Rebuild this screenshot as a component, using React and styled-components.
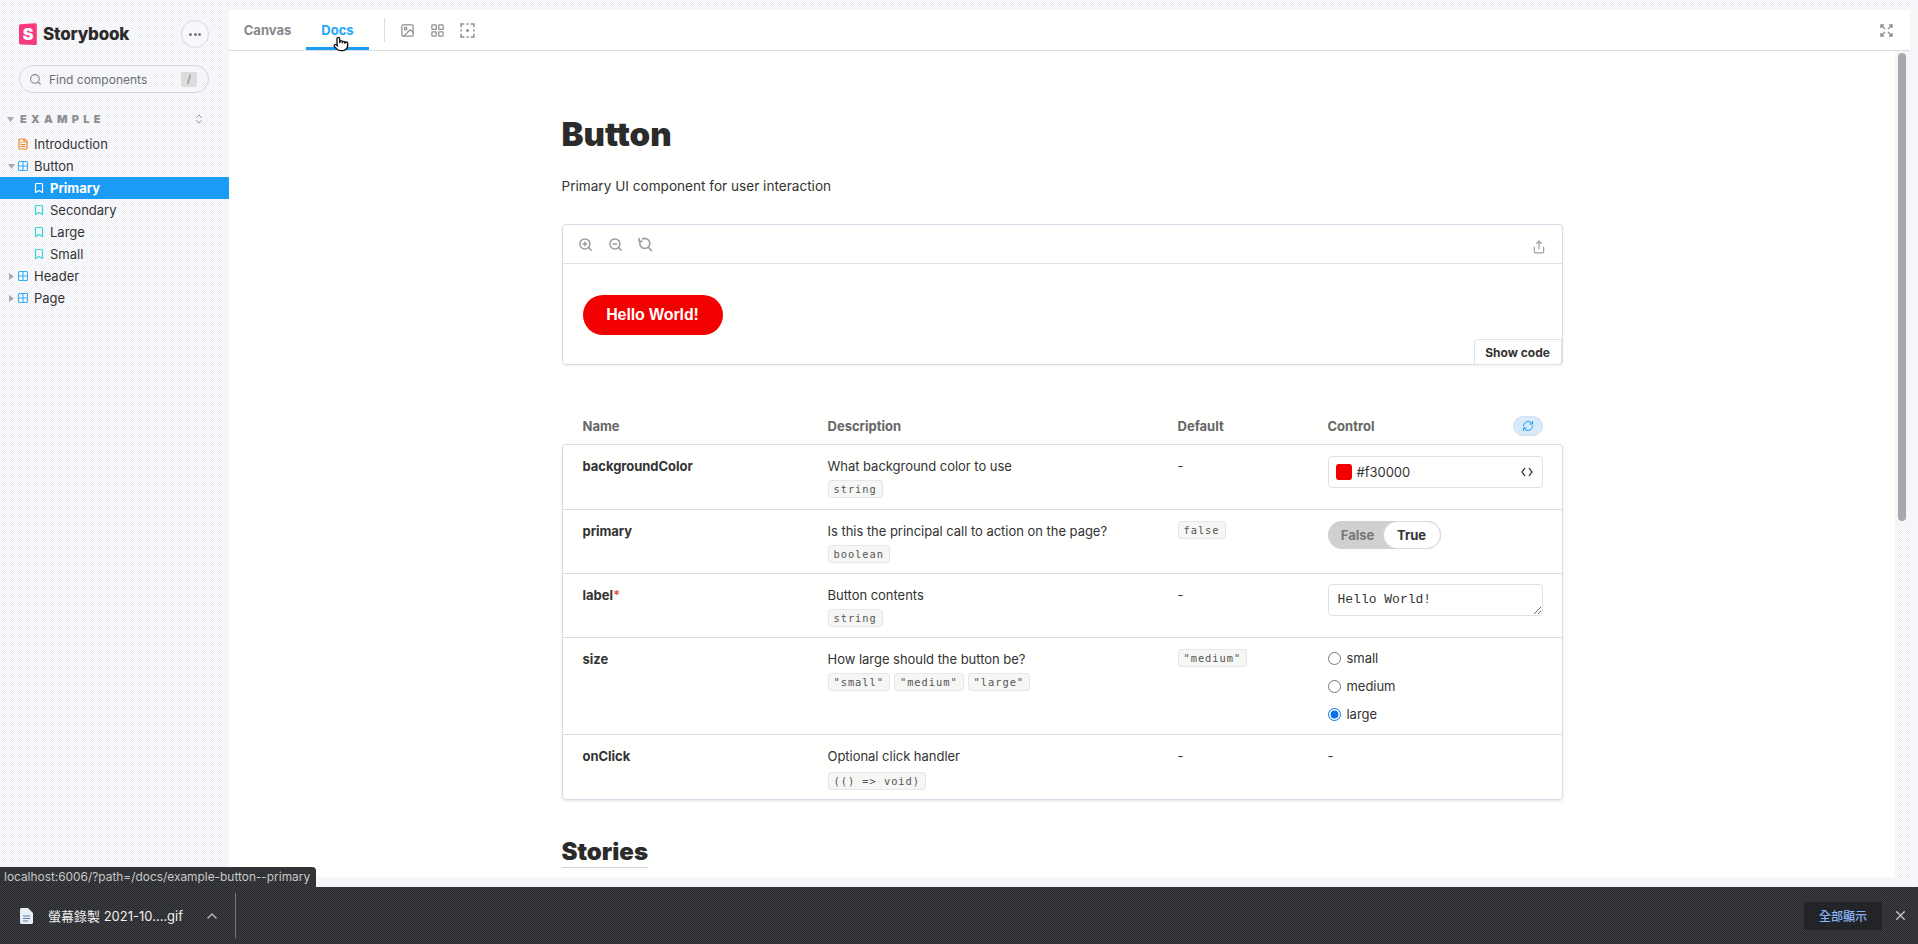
import React from "react";
import styled, { createGlobalStyle } from "styled-components";
import {
  Search, ZoomIn, ZoomOut, Image as ImageIcon, LayoutGrid, Share, ChevronUp, X,
  Bookmark, RefreshCw, ChevronsUpDown, Grid2x2, FileText, Pointer,
} from "lucide-react";

const sideDither = `repeating-conic-gradient(#eceef4 0 25%, #fefeff 0 50%) 0 0 / 2px 2px`;
const whiteDots = `radial-gradient(circle at 1px 1px, #fffcc8 0.5px, transparent 0.62px) 0 0 / 4px 4px, #fffffe`;
const darkDither = `repeating-conic-gradient(#2a2b2e 0 25%, #3b3c40 0 50%) 0 0 / 2px 2px`;

const Global = createGlobalStyle`
  html, body { margin: 0; padding: 0; height: 100%; overflow: hidden; }
  body { font-family: Inter, "Noto Sans CJK TC", sans-serif; color: #333; }
  #root { height: 100%; }
`;

const Page = styled.div`
  position: relative;
  display: flex;
  flex-direction: column;
  height: 100vh;
  background: ${sideDither};
`;
const Workspace = styled.div`
  flex: 1;
  min-height: 0;
  display: flex;
`;
const Sidebar = styled.aside`
  flex: 0 0 229px;
  display: flex;
  flex-direction: column;
  padding-top: 20px;
`;
const Brand = styled.div`
  display: flex;
  align-items: center;
  height: 28px;
  padding: 0 20px 0 19px;
  gap: 6px;
`;
const BrandName = styled.span`
  flex: 1;
  font-size: 17px;
  font-weight: 800;
  letter-spacing: -0.2px;
  color: #2b2b2b;
`;
const MenuButton = styled.button`
  width: 28px;
  height: 28px;
  border: 1px solid #d8d8dc;
  border-radius: 50%;
  background: #f7f8fb;
  color: #777;
  padding: 0;
  display: flex;
  align-items: center;
  justify-content: center;
  gap: 1.5px;
`;
const Dot = styled.i`
  width: 3px;
  height: 3px;
  border-radius: 50%;
  background: #777;
`;
const SearchBox = styled.div`
  display: flex;
  align-items: center;
  margin: 17px 20px 0 19px;
  height: 28px;
  box-sizing: border-box;
  border: 1px solid #d3d6de;
  border-radius: 14px;
  padding: 0 11px 0 9px;
  color: #888;
  font-size: 12px;
  gap: 7px;
`;
const SearchText = styled.span`
  flex: 1;
  color: #6b6f75;
`;
const Kbd = styled.span`
  width: 16px;
  height: 15px;
  background: #dcdcdc;
  color: #777;
  font-size: 11px;
  display: flex;
  align-items: center;
  justify-content: center;
  border-radius: 2px;
`;
const GroupHead = styled.div`
  display: flex;
  align-items: center;
  margin-top: 18px;
  height: 16px;
  padding: 0 24px 0 7px;
  color: #999;
`;
const GroupLabel = styled.span`
  flex: 1;
  margin-left: 6px;
  font-size: 11px;
  font-weight: 900;
  letter-spacing: 0.39em;
  color: #8f9193;
`;
const Tree = styled.div`
  margin-top: 6px;
  display: flex;
  flex-direction: column;
`;
const Row = styled.div`
  height: 22px;
  display: flex;
  align-items: center;
  font-size: 13px;
  color: ${(p) => (p.$active ? "#fff" : "#333")};
  font-weight: ${(p) => (p.$active ? 700 : 400)};
  background: ${(p) => (p.$active ? "#1a9bf5" : "transparent")};
  padding-left: ${(p) => (p.$sub ? 33 : 6)}px;
`;
const Caret = styled.span`
  width: 10px;
  display: flex;
  justify-content: center;
  color: #aaa;
`;
const RowIcon = styled.span`
  width: 12px;
  display: flex;
  justify-content: center;
  margin: 0 5px 0 ${(p) => (p.$sub ? 0 : 1)}px;
  color: ${(p) => p.$c};
`;

const Panel = styled.main`
  flex: 1;
  min-width: 0;
  margin: 10px 8px 10px 0;
  display: flex;
  flex-direction: column;
  background: ${whiteDots};
`;
const Toolbar = styled.div`
  flex: 0 0 40px;
  box-sizing: border-box;
  border-bottom: 1px solid #dcdde8;
  display: flex;
  align-items: center;
  padding: 0 17px 0 0;
  position: relative;
`;
const Tab = styled.div`
  height: 40px;
  box-sizing: border-box;
  display: flex;
  align-items: center;
  justify-content: center;
  width: ${(p) => p.$w}px;
  margin-left: ${(p) => p.$ml}px;
  font-size: 13px;
  font-weight: 700;
  color: ${(p) => (p.$active ? "#1ea7fd" : "#84878c")};
  border-bottom: 3px solid ${(p) => (p.$active ? "#1a9bf5" : "transparent")};
  padding-top: 3px;
`;
const Divider = styled.div`
  width: 1px;
  height: 24px;
  background: #dcdde0;
  margin: 0 15px;
`;
const ToolIcons = styled.div`
  display: flex;
  gap: 15px;
  color: #8d8f96;
  align-items: center;
`;
const Spacer = styled.div`
  flex: 1;
`;
const Cursor = styled.span`
  position: absolute;
  left: 104px;
  top: 26px;
  color: #111;
  line-height: 0;
`;
const Body = styled.div`
  flex: 1;
  min-height: 0;
  display: flex;
`;
const Doc = styled.div`
  flex: 1;
  min-width: 0;
  overflow: hidden;
  display: flex;
  justify-content: center;
  background: ${whiteDots};
`;
const Column = styled.div`
  width: 1001px;
  padding-top: 65px;
`;
const Track = styled.div`
  flex: 0 0 15px;
  background: ${sideDither};
  padding: 2px 4px 0 3px;
  box-sizing: border-box;
`;
const Thumb = styled.div`
  height: 468px;
  background: #a8a8ac;
  border-radius: 4px;
`;
const Title = styled.h1`
  margin: 0;
  font-size: 33px;
  line-height: 36px;
  font-weight: 900;
  color: #2b2b2b;
`;
const Lead = styled.p`
  margin: 24px 0 0;
  font-size: 13.6px;
  line-height: 20px;
  color: #333;
`;
const Preview = styled.section`
  margin-top: 28px;
  height: 141px;
  box-sizing: border-box;
  border: 1px solid #dadbe6;
  border-radius: 4px;
  position: relative;
  box-shadow: 0 1px 3px rgba(0, 0, 0, 0.07);
`;
const PreviewBar = styled.div`
  height: 39px;
  box-sizing: border-box;
  border-bottom: 1px solid #dfe0ea;
  display: flex;
  align-items: center;
  padding: 0 16px 0 15px;
  color: #9a9ca6;
  gap: 15px;
`;
const ShareSlot = styled.span`
  line-height: 0;
  margin-top: 5px;
`;
const PreviewStage = styled.div`
  padding: 31px 20px;
`;
const HelloButton = styled.button`
  width: 140px;
  height: 40px;
  border: 0;
  border-radius: 20px;
  background: #f30000;
  color: #fff;
  font: 700 16px "Liberation Sans", Arial, sans-serif;
  letter-spacing: -0.1px;
`;
const ShowCode = styled.button`
  position: absolute;
  right: 0;
  bottom: -1px;
  width: 88px;
  height: 26px;
  border: 1px solid #e2e3ea;
  border-radius: 4px 0 4px 0;
  background: #fff;
  color: #333;
  font: 700 12px Inter, sans-serif;
`;
const columns = "245px 350px 150px 215px";
const HeadRow = styled.div`
  margin-top: 51px;
  height: 20px;
  display: grid;
  grid-template-columns: ${columns};
  padding: 0 21px;
  font-size: 13px;
  line-height: 20px;
  font-weight: 700;
  color: #666;
`;
const HeadControl = styled.div`
  display: flex;
  justify-content: space-between;
  align-items: center;
`;
const ResetButton = styled.span`
  width: 30px;
  height: 20px;
  border-radius: 10px;
  background: #d6eafa;
  border: 1px solid #cfe0ee;
  box-sizing: border-box;
  color: #1a9bf5;
  display: flex;
  align-items: center;
  justify-content: center;
`;
const Table = styled.div`
  margin-top: 8px;
  border: 1px solid #dadbe6;
  border-radius: 4px;
  box-shadow: 0 1px 3px rgba(0, 0, 0, 0.1);
`;
const TRow = styled.div`
  display: grid;
  grid-template-columns: ${columns};
  padding: 0 20px;
  height: ${(p) => p.$h}px;
  box-sizing: border-box;
  & + & {
    border-top: 1px solid #dcdce4;
  }
`;
const Cell = styled.div`
  padding-top: 11px;
  font-size: 13px;
  line-height: 20px;
  letter-spacing: -0.03px;
`;
const Name = styled(Cell)`
  font-weight: 700;
  color: #333;
`;
const Required = styled.span`
  color: #e85a4f;
`;
const Pills = styled.div`
  margin-top: ${(p) => p.$mt || 4}px;
  display: flex;
  gap: 4px;
`;
const Pill = styled.code`
  display: block;
  width: fit-content;
  height: 18px;
  box-sizing: border-box;
  padding: 0 5px;
  background: #f6f6f4;
  border: 1px solid #e6e6ea;
  border-radius: 3px;
  font: 10.4px/16px "DejaVu Sans Mono", monospace;
  letter-spacing: 0.95px;
  color: #555;
`;
const ColorField = styled.div`
  height: 32px;
  box-sizing: border-box;
  border: 1px solid #dfe0e6;
  border-radius: 4px;
  display: flex;
  align-items: center;
  padding: 0 9px 0 7px;
  font-size: 13px;
  color: #333;
`;
const Swatch = styled.span`
  width: 16px;
  height: 16px;
  border-radius: 3px;
  background: #f30000;
  margin-right: 5px;
`;
const Toggle = styled.div`
  width: 113px;
  height: 28px;
  box-sizing: border-box;
  border-radius: 14px;
  background: #d0d0d0;
  display: flex;
  font-size: 13px;
  font-weight: 700;
`;
const ToggleOff = styled.span`
  flex: 0 0 55px;
  text-align: center;
  padding-left: 5px;
  box-sizing: border-box;
  line-height: 28px;
  color: #777;
`;
const ToggleOn = styled.span`
  flex: 1;
  background: #fff;
  border: 1px solid #d8d8e2;
  border-radius: 14px;
  text-align: center;
  line-height: 26px;
  color: #333;
`;
const Area = styled.textarea`
  display: block;
  width: 215px;
  height: 32px;
  margin: -1px 0 0;
  box-sizing: border-box;
  border: 1px solid #dfe0e6;
  border-radius: 4px;
  padding: 6px 9px;
  background: transparent;
  font: 13px/18px "Liberation Mono", monospace;
  color: #333;
  resize: vertical;
  overflow: hidden;
`;
const RadioGroup = styled.div`
  display: flex;
  flex-direction: column;
  margin-top: -5px;
`;
const RadioRow = styled.label`
  height: 28px;
  display: flex;
  align-items: center;
  gap: 6px;
  font-size: 13px;
  color: #333;
`;
const Radio = styled.input`
  width: 13px;
  height: 13px;
  margin: 0;
  accent-color: #0b6fe8;
`;
const Stories = styled.h2`
  display: inline-block;
  margin: 37px 0 0;
  font-size: 24px;
  line-height: 30px;
  font-weight: 900;
  color: #2b2b2b;
  border-bottom: 1px solid #cfd0d8;
`;

const DownloadBar = styled.footer`
  flex: 0 0 57px;
  display: flex;
  align-items: center;
  background: ${darkDither};
  color: #e8e8e8;
  padding: 0 10px 0 20px;
  font-size: 13px;
`;
const FileName = styled.span`
  margin-left: 15px;
  font-family: Inter, "Noto Sans CJK TC", sans-serif;
  color: #eee;
`;
const BarChevron = styled.span`
  margin-left: 21px;
  color: #bbb;
  line-height: 0;
`;
const BarDivider = styled.div`
  width: 1px;
  height: 45px;
  background: #77787b;
  margin-left: 15px;
`;
const ShowAll = styled.button`
  width: 78px;
  height: 28px;
  border: 0;
  border-radius: 2px;
  background: #232427;
  color: #8ab4f8;
  font: 500 12px "Noto Sans CJK TC", sans-serif;
  padding: 0;
`;
const CloseIcon = styled.span`
  margin-left: 11px;
  color: #ccc;
  line-height: 0;
`;
const StatusTip = styled.div`
  position: absolute;
  left: 0;
  bottom: 57px;
  height: 20px;
  box-sizing: border-box;
  padding: 0 6px 0 4px;
  border-radius: 0 4px 0 0;
  background: ${darkDither};
  color: #c8c8c8;
  font-size: 11.9px;
  line-height: 20px;
  white-space: nowrap;
`;

const Logo = () => (
  <svg width="18" height="22" viewBox="0 0 18 22">
    <path d="M1.6 1.3 16.2.2c.9 0 1.6.7 1.6 1.6v18.6c0 .9-.8 1.6-1.7 1.6L1.6 21.4C.7 21.3 0 20.6 0 19.8V2.9c0-.8.7-1.5 1.6-1.6Z" fill="#f7397f" />
    <text x="9" y="17" textAnchor="middle" fontFamily="Inter, sans-serif" fontWeight="900" fontSize="16" fill="#fff">S</text>
  </svg>
);
const FrameIcon = () => (
  <svg width="15" height="15" viewBox="0 0 14 14" fill="none" stroke="currentColor" strokeWidth="1.4">
    <path d="M1 4V1h3M6 1h2M10 1h3v3M13 6v2M13 10v3h-3M8 13H6M4 13H1v-3M1 8V6" />
    <circle cx="7" cy="7" r=".7" fill="currentColor" />
  </svg>
);
const FullIcon = () => (
  <svg width="13" height="13" viewBox="0 0 13 13" fill="none" stroke="#8d8f96" strokeWidth="1.4">
    <path d="M1 4V1h3M1 1l4 4M9 1h3v3M12 1 8 5M1 9v3h3M1 12l4-4M12 9v3H9M12 12 8 8" />
  </svg>
);
const ZoomReset = () => (
  <svg width="15" height="15" viewBox="0 0 15 15" fill="none" stroke="currentColor" strokeWidth="1.6">
    <path d="M4.2 2.2a5 5 0 1 1-2.2 3" />
    <path d="M1.2 1v3.4h3.4M10.4 10.4 14 14" />
  </svg>
);
const CodeChevrons = () => (
  <svg width="12" height="10" viewBox="0 0 12 10" fill="none" stroke="#444" strokeWidth="1.3">
    <path d="M4 1 1 5l3 4M8 1l3 4-3 4" />
  </svg>
);
const DocFile = () => (
  <svg width="13" height="16" viewBox="0 0 13 16">
    <path d="M0 1.5C0 .7.7 0 1.5 0H8l5 5v9.5c0 .8-.7 1.5-1.5 1.5h-10C.7 16 0 15.3 0 14.5Z" fill="#e8eef5" />
    <path d="M3 8h7M3 10.5h7M3 13h5" stroke="#5b7fa5" strokeWidth="1.2" />
  </svg>
);
const TriDown = () => (
  <svg width="7" height="5" viewBox="0 0 7 5"><path d="M0 0h7L3.5 5Z" fill="#a9abb0" /></svg>
);
const TriRight = () => (
  <svg width="5" height="7" viewBox="0 0 5 7"><path d="M0 0v7l5-3.5Z" fill="#a9abb0" /></svg>
);

const Story = ({ active, children }) => (
  <Row $sub $active={active}>
    <RowIcon $sub $c={active ? "#fff" : "#37d5d3"}><Bookmark size={12} strokeWidth={2.4} /></RowIcon>
    {children}
  </Row>
);
const Comp = ({ open, children }) => (
  <Row>
    <Caret>{open ? <TriDown /> : <TriRight />}</Caret>
    <RowIcon $c="#3aaef5"><Grid2x2 size={12} strokeWidth={2.2} /></RowIcon>
    {children}
  </Row>
);

export default function App() {
  return (
    <Page>
      <Global />
      <Workspace>
        <Sidebar>
          <Brand>
            <Logo />
            <BrandName>Storybook</BrandName>
            <MenuButton><Dot /><Dot /><Dot /></MenuButton>
          </Brand>
          <SearchBox>
            <Search size={13} />
            <SearchText>Find components</SearchText>
            <Kbd>/</Kbd>
          </SearchBox>
          <GroupHead>
            <TriDown />
            <GroupLabel>EXAMPLE</GroupLabel>
            <ChevronsUpDown size={12} />
          </GroupHead>
          <Tree>
            <Row>
              <Caret />
              <RowIcon $c="#f08a24"><FileText size={12} strokeWidth={2.4} /></RowIcon>
              Introduction
            </Row>
            <Comp open>Button</Comp>
            <Story active>Primary</Story>
            <Story>Secondary</Story>
            <Story>Large</Story>
            <Story>Small</Story>
            <Comp>Header</Comp>
            <Comp>Page</Comp>
          </Tree>
        </Sidebar>
        <Panel>
          <Toolbar>
            <Tab $w={47} $ml={15}>Canvas</Tab>
            <Tab $w={63} $ml={15} $active>Docs</Tab>
            <Divider />
            <ToolIcons>
              <ImageIcon size={15} />
              <LayoutGrid size={15} />
              <FrameIcon />
            </ToolIcons>
            <Spacer />
            <FullIcon />
            <Cursor><Pointer size={16} fill="#fff" /></Cursor>
          </Toolbar>
          <Body>
            <Doc>
              <Column>
                <Title>Button</Title>
                <Lead>Primary UI component for user interaction</Lead>
                <Preview>
                  <PreviewBar>
                    <ZoomIn size={15} strokeWidth={2.4} />
                    <ZoomOut size={15} strokeWidth={2.4} />
                    <ZoomReset />
                    <Spacer />
                    <ShareSlot><Share size={14} /></ShareSlot>
                  </PreviewBar>
                  <PreviewStage>
                    <HelloButton>Hello World!</HelloButton>
                  </PreviewStage>
                  <ShowCode>Show code</ShowCode>
                </Preview>
                <HeadRow>
                  <span>Name</span>
                  <span>Description</span>
                  <span>Default</span>
                  <HeadControl>
                    Control
                    <ResetButton><RefreshCw size={12} /></ResetButton>
                  </HeadControl>
                </HeadRow>
                <Table>
                  <TRow $h={64}>
                    <Name>backgroundColor</Name>
                    <Cell>What background color to use<Pills><Pill>string</Pill></Pills></Cell>
                    <Cell>-</Cell>
                    <Cell>
                      <ColorField>
                        <Swatch />
                        #f30000
                        <Spacer />
                        <CodeChevrons />
                      </ColorField>
                    </Cell>
                  </TRow>
                  <TRow $h={64}>
                    <Name>primary</Name>
                    <Cell>Is this the principal call to action on the page?<Pills><Pill>boolean</Pill></Pills></Cell>
                    <Cell><Pill>false</Pill></Cell>
                    <Cell>
                      <Toggle>
                        <ToggleOff>False</ToggleOff>
                        <ToggleOn>True</ToggleOn>
                      </Toggle>
                    </Cell>
                  </TRow>
                  <TRow $h={64}>
                    <Name>label<Required>*</Required></Name>
                    <Cell>Button contents<Pills><Pill>string</Pill></Pills></Cell>
                    <Cell>-</Cell>
                    <Cell><Area defaultValue="Hello World!" spellCheck={false} /></Cell>
                  </TRow>
                  <TRow $h={97}>
                    <Name>size</Name>
                    <Cell>
                      How large should the button be?
                      <Pills><Pill>"small"</Pill><Pill>"medium"</Pill><Pill>"large"</Pill></Pills>
                    </Cell>
                    <Cell><Pill>"medium"</Pill></Cell>
                    <Cell>
                      <RadioGroup>
                        <RadioRow><Radio type="radio" name="size" />small</RadioRow>
                        <RadioRow><Radio type="radio" name="size" />medium</RadioRow>
                        <RadioRow><Radio type="radio" name="size" defaultChecked />large</RadioRow>
                      </RadioGroup>
                    </Cell>
                  </TRow>
                  <TRow $h={65}>
                    <Name>onClick</Name>
                    <Cell>Optional click handler<Pills $mt={6}><Pill>(() =&gt; void)</Pill></Pills></Cell>
                    <Cell>-</Cell>
                    <Cell>-</Cell>
                  </TRow>
                </Table>
                <Stories>Stories</Stories>
              </Column>
            </Doc>
            <Track><Thumb /></Track>
          </Body>
        </Panel>
      </Workspace>
      <DownloadBar>
        <DocFile />
        <FileName>螢幕錄製 2021-10....gif</FileName>
        <BarChevron><ChevronUp size={16} /></BarChevron>
        <BarDivider />
        <Spacer />
        <ShowAll>全部顯示</ShowAll>
        <CloseIcon><X size={15} /></CloseIcon>
      </DownloadBar>
      <StatusTip>localhost:6006/?path=/docs/example-button--primary</StatusTip>
    </Page>
  );
}
